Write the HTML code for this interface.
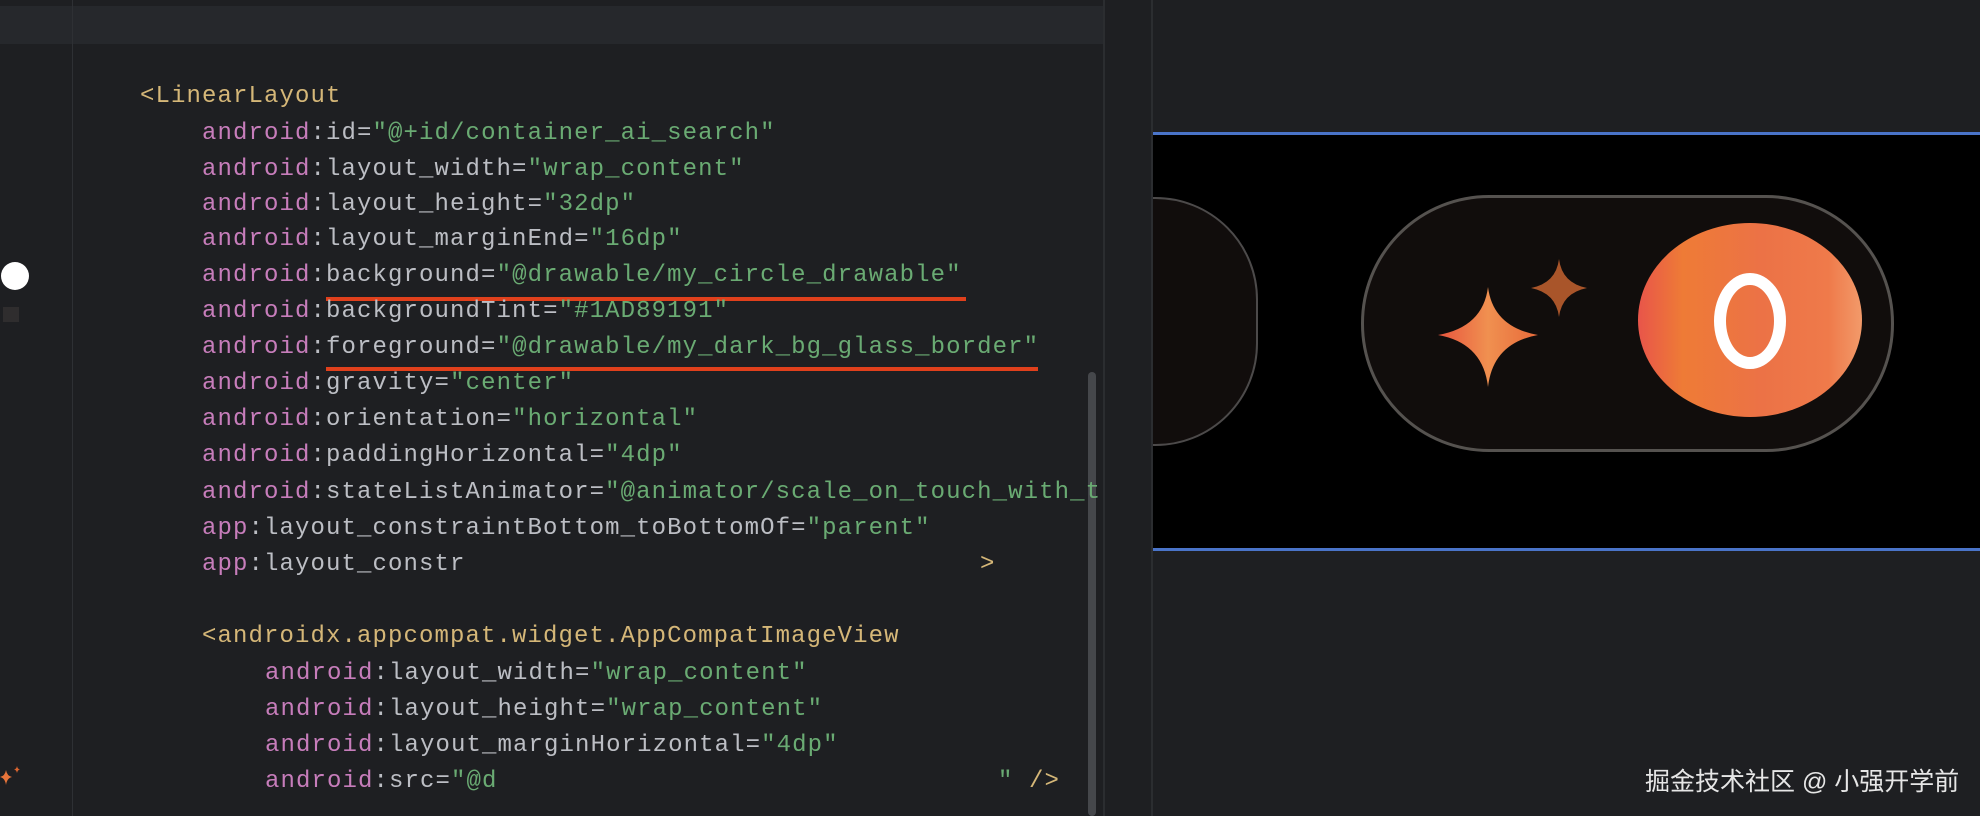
<!DOCTYPE html>
<html><head><meta charset="utf-8"><style>
html,body{margin:0;padding:0;}
body{width:1980px;height:816px;background:#1e1f22;position:relative;overflow:hidden;font-family:"Liberation Mono",monospace;}
.l{position:absolute;height:36px;line-height:36px;font-size:24px;letter-spacing:1.1px;white-space:pre;color:#bcbec4;}
.p{color:#c77dbb}.g{color:#6aab73}.y{color:#d5b778}
.u{position:absolute;height:4px;background:#e0401c;}
</style></head><body>
<div style="position:absolute;left:0;top:6px;width:1103px;height:38px;background:#26282c"></div>
<div style="position:absolute;left:72px;top:0;width:1px;height:816px;background:#2e3034"></div>
<div style="position:absolute;left:1103px;top:0;width:2px;height:816px;background:#2b2d30"></div>
<div style="position:absolute;left:1151px;top:0;width:2px;height:816px;background:#2b2d30"></div>
<div style="position:absolute;left:1088px;top:372px;width:8px;height:444px;border-radius:4px;background:#45474b"></div>
<div style="position:absolute;left:1px;top:262px;width:28px;height:28px;border-radius:50%;background:#fff"></div>
<div style="position:absolute;left:3px;top:307px;width:16px;height:15px;background:#2f2d2e"></div>
<svg style="position:absolute;left:0;top:762px" width="30" height="30" viewBox="0 0 30 30"><path d="M6 8 Q7 14 12 15 Q7 16 6 23 Q5 16 0 15 Q5 14 6 8Z" fill="#e8743a"/><path d="M17 4 Q17.5 7 20 7.5 Q17.5 8 17 11 Q16.5 8 14 7.5 Q16.5 7 17 4Z" fill="#d9642f"/></svg>

<div class="l y" style="left:140px;top:79px">&lt;LinearLayout</div>
<div class="l" style="left:202px;top:116px"><span class="p">android</span>:id=<span class="g">"@+id/container_ai_search"</span></div>
<div class="l" style="left:202px;top:152px"><span class="p">android</span>:layout_width=<span class="g">"wrap_content"</span></div>
<div class="l" style="left:202px;top:187px"><span class="p">android</span>:layout_height=<span class="g">"32dp"</span></div>
<div class="l" style="left:202px;top:222px"><span class="p">android</span>:layout_marginEnd=<span class="g">"16dp"</span></div>
<div class="l" style="left:202px;top:258px"><span class="p">android</span>:background=<span class="g">"@drawable/my_circle_drawable"</span></div>
<div class="u" style="left:326px;top:297px;width:640px"></div>
<div class="l" style="left:202px;top:294px"><span class="p">android</span>:backgroundTint=<span class="g">"#1AD89191"</span></div>
<div class="l" style="left:202px;top:330px"><span class="p">android</span>:foreground=<span class="g">"@drawable/my_dark_bg_glass_border"</span></div>
<div class="u" style="left:326px;top:367px;width:712px"></div>
<div class="l" style="left:202px;top:366px"><span class="p">android</span>:gravity=<span class="g">"center"</span></div>
<div class="l" style="left:202px;top:402px"><span class="p">android</span>:orientation=<span class="g">"horizontal"</span></div>
<div class="l" style="left:202px;top:438px"><span class="p">android</span>:paddingHorizontal=<span class="g">"4dp"</span></div>
<div class="l" style="left:202px;top:475px;width:900px;overflow:hidden"><span class="p">android</span>:stateListAnimator=<span class="g">"@animator/scale_on_touch_with_t</span></div>
<div class="l" style="left:202px;top:511px"><span class="p">app</span>:layout_constraintBottom_toBottomOf=<span class="g">"parent"</span></div>
<div class="l" style="left:202px;top:547px"><span class="p">app</span>:layout_constr</div>
<div class="l y" style="left:980px;top:547px">&gt;</div>
<div class="l y" style="left:202px;top:619px">&lt;androidx.appcompat.widget.AppCompatImageView</div>
<div class="l" style="left:265px;top:656px"><span class="p">android</span>:layout_width=<span class="g">"wrap_content"</span></div>
<div class="l" style="left:265px;top:692px"><span class="p">android</span>:layout_height=<span class="g">"wrap_content"</span></div>
<div class="l" style="left:265px;top:728px"><span class="p">android</span>:layout_marginHorizontal=<span class="g">"4dp"</span></div>
<div class="l" style="left:265px;top:764px"><span class="p">android</span>:src=<span class="g">"@d</span></div>
<div class="l" style="left:998px;top:764px"><span class="g">"</span> <span class="y">/&gt;</span></div>

<div style="position:absolute;left:1153px;top:132px;width:827px;height:3px;background:#4a74c9"></div>
<div style="position:absolute;left:1153px;top:135px;width:827px;height:413px;background:#000;overflow:hidden">
  <div style="position:absolute;left:-100px;top:62px;width:205px;height:249px;border-radius:125px;background:#110d0c;border:2px solid #4c4a4a;box-sizing:border-box"></div>
  <div style="position:absolute;left:208px;top:60px;width:533px;height:257px;border-radius:128px;background:#110d0c;border:3px solid #55524f;box-sizing:border-box"></div>
  <div style="position:absolute;left:485px;top:88px;width:224px;height:194px;border-radius:50%;background:linear-gradient(90deg,#e8554a 0%,#ee7b36 20%,#ec7246 55%,#ef7a4a 85%,#f29a6a 100%)"></div>
  <div style="position:absolute;left:561px;top:138px;width:72px;height:96px;border:12px solid #fff;border-radius:50%;box-sizing:border-box"></div>
  <svg style="position:absolute;left:283px;top:150px" width="104" height="104" viewBox="0 0 104 104"><defs><linearGradient id="a" x1="0" x2="1"><stop offset="0" stop-color="#e8553e"/><stop offset=".5" stop-color="#f09050"/><stop offset="1" stop-color="#e86a3a"/></linearGradient></defs><path d="M52 2 Q57 42 102 50 Q57 58 52 102 Q47 58 2 50 Q47 42 52 2Z" fill="url(#a)"/></svg>
  <svg style="position:absolute;left:376px;top:122px" width="60" height="62" viewBox="0 0 60 62"><path d="M30 2 Q33 26 58 31 Q33 36 30 60 Q27 36 2 31 Q27 26 30 2Z" fill="#a9552a"/></svg>
</div>
<div style="position:absolute;left:1153px;top:548px;width:827px;height:3px;background:#4a74c9"></div>
<div style="position:absolute;left:1645px;top:762px;font-family:'Liberation Sans','Noto Sans CJK SC',sans-serif;font-size:25px;color:#e6e6e6;white-space:nowrap">掘金技术社区 @ 小强开学前</div>
</body></html>
